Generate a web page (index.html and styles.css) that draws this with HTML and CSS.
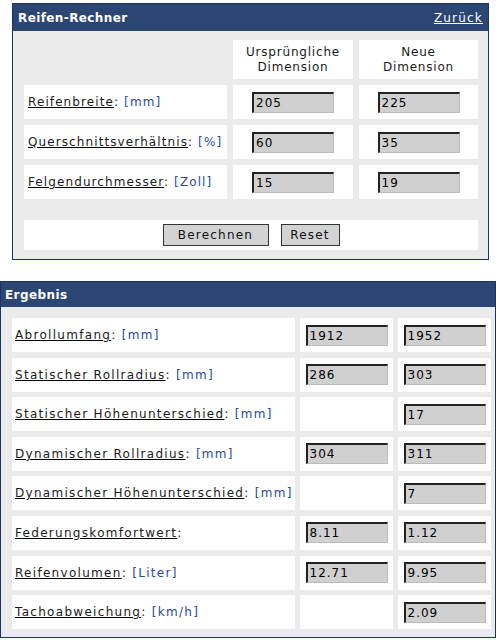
FILE: index.html
```html
<!DOCTYPE html>
<html lang="de">
<head>
    <meta charset="UTF-8">
    <meta name="viewport" content="width=device-width, initial-scale=1.0">
    <title>Reifen-Rechner</title>
    <link rel="stylesheet" href="styles.css">
</head>
<body>
    <div class="panel rechner">
        <div class="panel-head">
            <span class="titel">Reifen-Rechner</span>
            <a href="#" class="zurueck">Zurück</a>
        </div>
        <div class="panel-body raster-rechner">
            <div class="zelle leer"></div>
            <div class="zelle kopf">Ursprüngliche<br>Dimension</div>
            <div class="zelle kopf">Neue<br>Dimension</div>

            <div class="zelle label"><span><span class="begriff">Reifenbreite</span>: <span class="einheit">[mm]</span></span></div>
            <div class="zelle feld"><input type="text" value="205"></div>
            <div class="zelle feld"><input type="text" value="225"></div>

            <div class="zelle label"><span><span class="begriff">Querschnittsverhältnis</span>: <span class="einheit">[%]</span></span></div>
            <div class="zelle feld"><input type="text" value="60"></div>
            <div class="zelle feld"><input type="text" value="35"></div>

            <div class="zelle label"><span><span class="begriff">Felgendurchmesser</span>: <span class="einheit">[Zoll]</span></span></div>
            <div class="zelle feld"><input type="text" value="15"></div>
            <div class="zelle feld"><input type="text" value="19"></div>

            <div class="zelle aktionen">
                <button class="btn btn-berechnen">Berechnen</button>
                <button class="btn btn-reset">Reset</button>
            </div>
        </div>
    </div>

    <div class="panel ergebnis">
        <div class="panel-head">
            <span class="titel">Ergebnis</span>
        </div>
        <div class="panel-body raster-ergebnis">
            <div class="zelle label"><span><span class="begriff">Abrollumfang</span>: <span class="einheit">[mm]</span></span></div>
            <div class="zelle feld"><input type="text" value="1912" readonly></div>
            <div class="zelle feld"><input type="text" value="1952" readonly></div>

            <div class="zelle label"><span><span class="begriff">Statischer Rollradius</span>: <span class="einheit">[mm]</span></span></div>
            <div class="zelle feld"><input type="text" value="286" readonly></div>
            <div class="zelle feld"><input type="text" value="303" readonly></div>

            <div class="zelle label"><span><span class="begriff">Statischer Höhenunterschied</span>: <span class="einheit">[mm]</span></span></div>
            <div class="zelle feld"></div>
            <div class="zelle feld"><input type="text" value="17" readonly></div>

            <div class="zelle label"><span><span class="begriff">Dynamischer Rollradius</span>: <span class="einheit">[mm]</span></span></div>
            <div class="zelle feld"><input type="text" value="304" readonly></div>
            <div class="zelle feld"><input type="text" value="311" readonly></div>

            <div class="zelle label"><span><span class="begriff">Dynamischer Höhenunterschied</span>: <span class="einheit">[mm]</span></span></div>
            <div class="zelle feld"></div>
            <div class="zelle feld"><input type="text" value="7" readonly></div>

            <div class="zelle label"><span><span class="begriff">Federungskomfortwert</span>:</span></div>
            <div class="zelle feld"><input type="text" value="8.11" readonly></div>
            <div class="zelle feld"><input type="text" value="1.12" readonly></div>

            <div class="zelle label"><span><span class="begriff">Reifenvolumen</span>: <span class="einheit">[Liter]</span></span></div>
            <div class="zelle feld"><input type="text" value="12.71" readonly></div>
            <div class="zelle feld"><input type="text" value="9.95" readonly></div>

            <div class="zelle label"><span><span class="begriff">Tachoabweichung</span>: <span class="einheit">[km/h]</span></span></div>
            <div class="zelle feld"></div>
            <div class="zelle feld"><input type="text" value="2.09" readonly></div>
        </div>
    </div>
</body>
</html>
```

FILE: styles.css
```css
body {
    margin: 0;
    background-color: #fff;
    font-family: "DejaVu Sans", Verdana, sans-serif;
    font-size: 12px;
    letter-spacing: 1.2px;
    color: #1a1a1a;
    width: 496px;
    height: 640px;
    overflow: hidden;
}
.panel {
    border: 1px solid #1d3362;
    background-color: #ebebeb;
}
.rechner {
    margin: 3px 0 0 12px;
    width: 475px;
}
.ergebnis {
    margin-top: 21px;
    width: 494px;
}
.panel-head {
    background-color: #2c4673;
    color: #fff;
    display: flex;
    justify-content: space-between;
    align-items: center;
    height: 27px;
    padding: 0 5px;
}
.ergebnis .panel-head {
    height: 25px;
    padding: 0 4px;
}
.titel {
    font-weight: bold;
    letter-spacing: 0.4px;
}
.zurueck {
    color: #fff;
    text-decoration: underline;
}
.panel-body {
    display: grid;
    gap: 6px;
}
.raster-rechner {
    grid-template-columns: 203px 120px 119px;
    padding: 9px 10px 9px 11px;
}
.raster-ergebnis {
    grid-template-columns: 283px 93px 93px;
    grid-auto-rows: 34px;
    column-gap: 5px;
    row-gap: 5.6px;
    padding: 11px 3px 8px 11px;
}
.zelle {
    background-color: #fff;
    display: flex;
    align-items: center;
}
.zelle.leer {
    background-color: transparent;
}
.zelle.kopf {
    justify-content: center;
    text-align: center;
    line-height: 15px;
    height: 39px;
    letter-spacing: 0.8px;
}
.zelle.label {
    white-space: nowrap;
    letter-spacing: 1.3px;
}
.raster-rechner .zelle.label,
.raster-rechner .zelle.feld {
    height: 34px;
}
.raster-rechner .zelle.label {
    padding-left: 4px;
    letter-spacing: 1.1px;
}
.raster-ergebnis .zelle.label {
    padding-left: 3px;
}
.zelle.feld {
    justify-content: center;
}
.begriff {
    text-decoration: underline;
    text-decoration-color: #000;
}
.einheit {
    color: #2a4a94;
}
input {
    width: 82px;
    height: 21px;
    box-sizing: border-box;
    border-style: solid;
    border-width: 2px 1px 1px 2px;
    border-color: #222 #bbb #bbb #222;
    background-color: #d0d0d0;
    font-family: "DejaVu Sans", Verdana, sans-serif;
    font-size: 12px;
    letter-spacing: 1px;
    color: #000;
    padding: 0 2px;
    margin: 0;
}
.zelle.aktionen {
    grid-column: 1 / 4;
    margin-top: 15px;
    height: 30px;
    justify-content: center;
    gap: 12px;
}
.btn {
    height: 22px;
    background-color: #d3d3d3;
    border: 1px solid #333;
    font-family: "DejaVu Sans", Verdana, sans-serif;
    font-size: 12px;
    letter-spacing: 1.2px;
    color: #111;
    padding: 0;
    cursor: pointer;
}
.btn-berechnen {
    width: 106px;
}
.btn-reset {
    width: 59px;
}
```
